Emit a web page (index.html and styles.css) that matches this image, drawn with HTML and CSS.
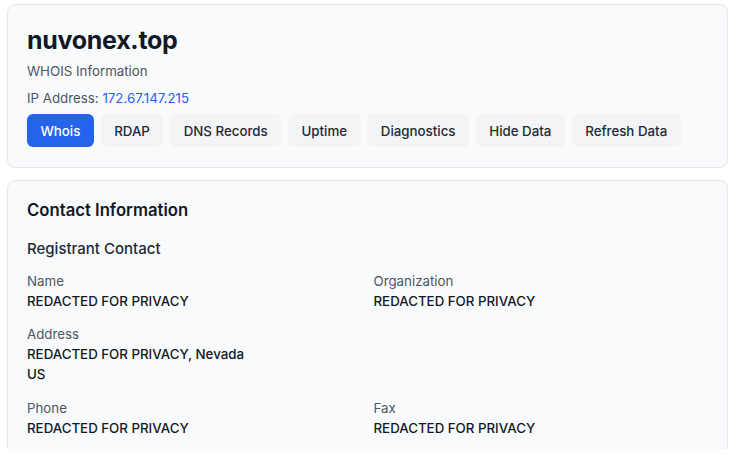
FILE: index.html
```html
<!DOCTYPE html>
<html lang="en">
<head>
    <meta charset="UTF-8">
    <meta name="viewport" content="width=device-width, initial-scale=1.0">
    <title>nuvonex.top - WHOIS Information</title>
    <link rel="stylesheet" href="styles.css">
</head>
<body>
    <div class="page">
        <div class="card header-card">
            <h1>nuvonex.top</h1>
            <p class="subtitle">WHOIS Information</p>
            <p class="ip">IP Address: <a href="#">172.67.147.215</a></p>
            <div class="tabs">
                <button class="tab active">Whois</button>
                <button class="tab">RDAP</button>
                <button class="tab">DNS Records</button>
                <button class="tab">Uptime</button>
                <button class="tab">Diagnostics</button>
                <button class="tab">Hide Data</button>
                <button class="tab">Refresh Data</button>
            </div>
        </div>

        <div class="card contact-card">
            <h2>Contact Information</h2>
            <h3>Registrant Contact</h3>
            <div class="fields">
                <div class="field">
                    <div class="label">Name</div>
                    <div class="value">REDACTED FOR PRIVACY</div>
                </div>
                <div class="field">
                    <div class="label">Organization</div>
                    <div class="value">REDACTED FOR PRIVACY</div>
                </div>
                <div class="field">
                    <div class="label">Address</div>
                    <div class="value">REDACTED FOR PRIVACY, Nevada<br>US</div>
                </div>
                <div class="field"></div>
                <div class="field">
                    <div class="label">Phone</div>
                    <div class="value">REDACTED FOR PRIVACY</div>
                </div>
                <div class="field">
                    <div class="label">Fax</div>
                    <div class="value">REDACTED FOR PRIVACY</div>
                </div>
            </div>
        </div>
    </div>
</body>
</html>
```

FILE: styles.css
```css
* {
    box-sizing: border-box;
}
body {
    margin: 0;
    background: #ffffff;
    font-family: Inter, "Noto Sans", sans-serif;
    color: #111827;
}
.page {
    height: 449px;
    overflow: hidden;
    padding: 4px 8px 0 7px;
    display: flex;
    flex-direction: column;
    gap: 12px;
}
.card {
    background: #f9fafb;
    border: 1px solid #e5e7eb;
    border-radius: 8px;
    padding: 19px 19px 20px 19px;
    flex-shrink: 0;
}
h1 {
    margin: 0;
    font-size: 25px;
    line-height: 32px;
    font-weight: 700;
    letter-spacing: -0.3px;
}
.subtitle {
    margin: 5px 0 0;
    font-size: 13.3px;
    line-height: 20px;
    color: #4b5563;
}
.ip {
    margin: 7px 0 0;
    font-size: 13.3px;
    line-height: 20px;
    color: #4b5563;
}
.ip a {
    color: #2563eb;
    text-decoration: none;
}
.tabs {
    display: flex;
    gap: 6.8px;
    margin-top: 6px;
}
.tab {
    font-family: inherit;
    font-size: 13.3px;
    font-weight: 500;
    line-height: 20px;
    padding: 7px 13.5px 6px;
    border: none;
    border-radius: 6px;
    background: #f3f4f6;
    color: #1f2937;
}
.tab.active {
    background: #2563eb;
    color: #ffffff;
}
h2 {
    margin: 0;
    font-size: 16.7px;
    line-height: 20px;
    font-weight: 600;
}
h3 {
    margin: 17.5px 0 0;
    font-size: 15px;
    line-height: 22px;
    font-weight: 500;
    color: #1f2937;
}
.fields {
    display: grid;
    grid-template-columns: 1fr 1fr;
    column-gap: 12px;
    row-gap: 13.5px;
    margin-top: 11px;
}
.label {
    font-size: 13.3px;
    line-height: 20px;
    color: #4b5563;
}
.value {
    font-size: 13.3px;
    line-height: 20px;
    font-weight: 500;
    color: #111827;
}
```
